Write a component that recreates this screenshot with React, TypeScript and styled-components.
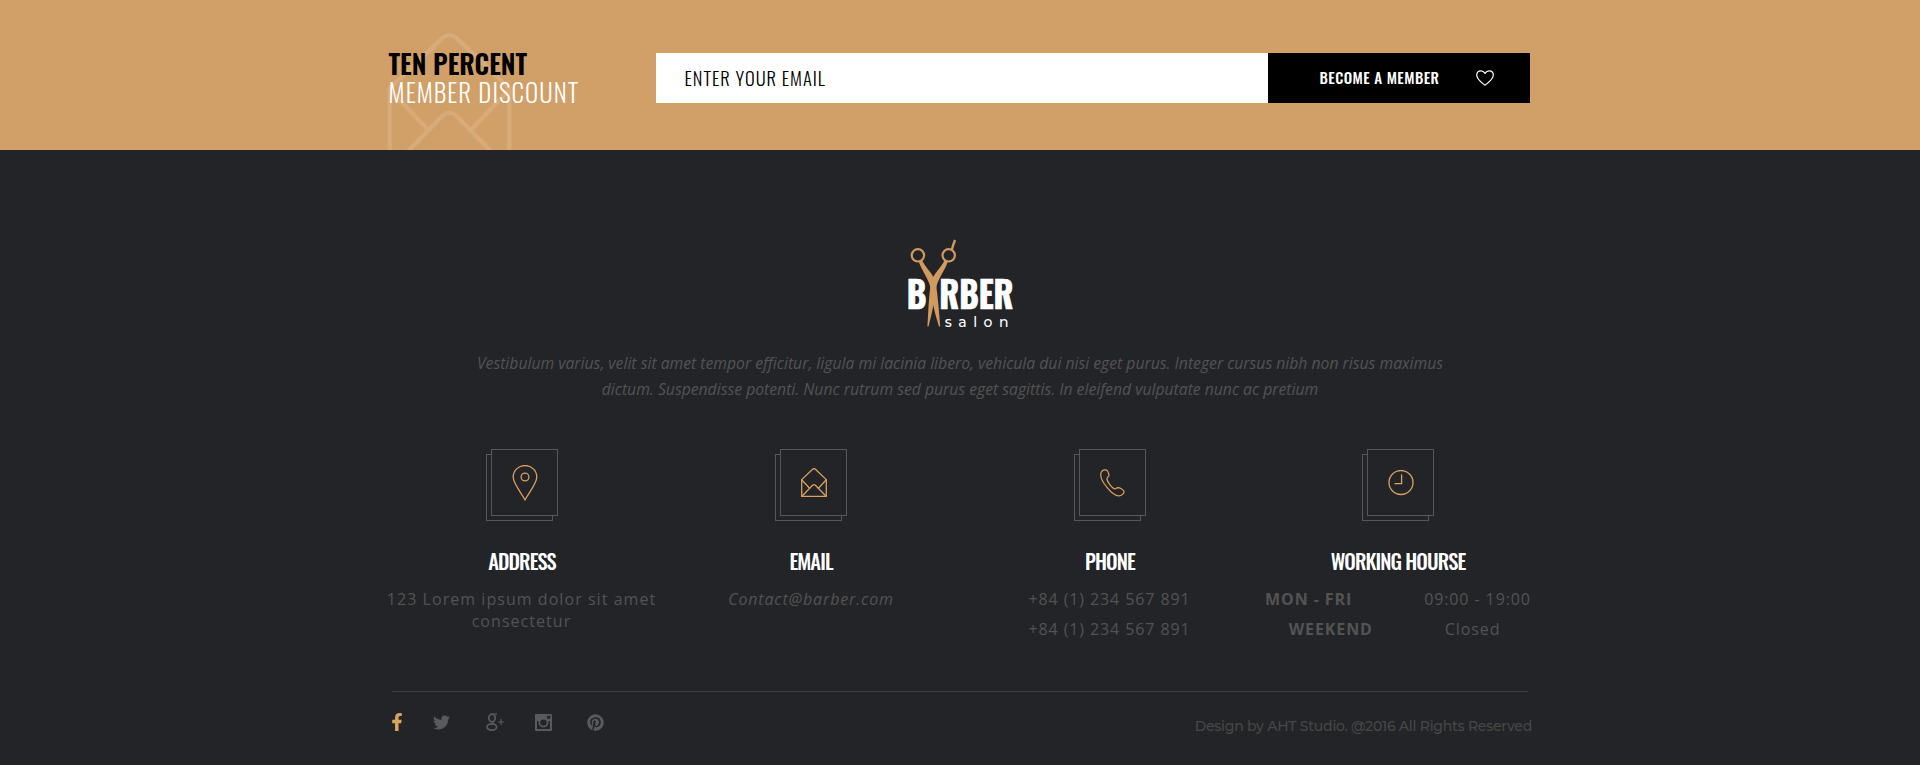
import React from "react";
import styled, { createGlobalStyle } from "styled-components";
import { FaFacebookF, FaTwitter, FaPinterest } from "react-icons/fa";

const gold = "#d19f68";
const dark = "#232428";
const grey = "#545353";

const Global = createGlobalStyle`
  *, *::before { box-sizing: border-box; }
  body { margin: 0; background: ${dark}; font-family: "Open Sans", sans-serif; }
  h2, h3, p { margin: 0; }
`;

const Promo = styled.section`
  height: 150px;
  background: ${gold};
  overflow: hidden;
`;

const Container = styled.div`
  width: 1140px;
  margin: 0 auto;
`;

const PromoRow = styled(Container)`
  display: flex;
  padding-top: 49px;
`;

const PromoTitle = styled.h2`
  position: relative;
  width: 266px;
  font-family: Oswald, sans-serif;
  font-weight: 600;
  font-size: 26.5px;
  line-height: 28px;
  color: #000;
  text-indent: -1.5px;
`;

const PromoSub = styled.span`
  display: block;
  padding-top: 1px;
  font-weight: 300;
  font-size: 25px;
  letter-spacing: 1.05px;
  color: #fff;
`;

const Watermark = styled.svg`
  position: absolute;
  left: -4px;
  top: -17px;
`;

const TitleText = styled.span`
  position: relative;
  display: block;
`;

const Form = styled.form`
  display: flex;
  width: 874px;
  height: 50px;
  margin-top: 4px;
`;

const EmailInput = styled.div`
  flex: 1;
  padding-left: 28.5px;
  background: #fff;
  color: #000;
  font: 300 18.5px/49px Oswald, sans-serif;
  letter-spacing: 0.95px;
`;

const JoinButton = styled.button`
  width: 262px;
  display: flex;
  align-items: center;
  justify-content: space-between;
  border: 0;
  padding: 0 36px 0 51.5px;
  background: #000;
  color: #fff;
  font: 500 15px/48px Oswald, sans-serif;
  letter-spacing: 0.45px;
`;

const JoinLabel = styled.span`
  padding-bottom: 2px;
`;

const Footer = styled.footer`
  height: 615px;
  padding-top: 86px;
  background: ${dark};
`;

const Logo = styled.svg`
  display: block;
  margin: 0 auto;
  overflow: visible;
`;

const Intro = styled.p`
  margin-top: 22px;
  color: ${grey};
  font-style: italic;
  font-size: 15.72px;
  line-height: 26px;
  text-align: center;
`;

const Columns = styled.div`
  display: grid;
  grid-template-columns: 272px 306px 292px 284px;
  width: 1160px;
  margin: 47px auto 0;
  padding-left: 6px;
`;

const Column = styled.div`
  display: flex;
  flex-direction: column;
  align-items: center;
`;

const IconFrame = styled.div`
  position: relative;
  width: 72px;
  height: 72px;
  padding-left: 5px;
  &::before {
    content: "";
    position: absolute;
    left: 0;
    bottom: 0;
    width: 67px;
    height: 67px;
    border: 1px solid #57575a;
  }
`;

const IconFace = styled.div`
  position: relative;
  width: 67px;
  height: 67px;
  display: flex;
  align-items: center;
  justify-content: center;
  border: 1px solid #57575a;
  background: ${dark};
`;

const ColumnTitle = styled.h3`
  margin-top: 25px;
  font: 500 20.5px/30px Oswald, sans-serif;
  letter-spacing: -0.9px;
  color: #fff;
`;

const Detail = styled.p<{ $italic?: boolean; $spacing?: number; $end?: number }>`
  margin-top: 12px;
  & + & { margin-top: 8px; }
  padding-right: ${(p) => p.$end ?? 0}px;
  color: ${grey};
  font-size: 16px;
  line-height: 22px;
  letter-spacing: ${(p) => p.$spacing ?? 0.9}px;
  text-align: center;
  white-space: nowrap;
  font-style: ${(p) => (p.$italic ? "italic" : "normal")};
`;

const HoursRow = styled(Detail)`
  display: flex;
  gap: 72px;
`;

const Bottom = styled(Container)`
  display: flex;
  justify-content: space-between;
  width: 1136px;
  margin-top: 51px;
  border-top: 1px solid #3d3d40;
  padding-top: 20px;
`;

const Social = styled.div`
  display: flex;
  align-items: center;
  height: 20px;
  margin-left: -4px;
`;

const SocialLink = styled.a<{ $active?: boolean; $gap?: number }>`
  display: flex;
  margin-left: ${(p) => p.$gap || 0}px;
  color: ${(p) => (p.$active ? "#d9a25f" : "#5a5a5b")};
`;

const Copyright = styled.p`
  margin-right: -4px;
  color: #484745;
  font: 500 14px/28px Montserrat, sans-serif;
  letter-spacing: -0.24px;
`;

const stroke = { fill: "none", stroke: "#d9a060", strokeWidth: 1.3, strokeLinejoin: "round", strokeLinecap: "round" } as const;

const EnvelopeShape = () => (
  <>
    <path d="M.7 11.6 L11.6 1.2 Q13 0 14.4 1.2 L25.3 11.6 V28.3 H.7 Z" />
    <path d="M.7 11.8 L8.6 20.2 M25.3 11.8 L17.4 20.2" />
    <path d="M.9 28.2 L11.6 17.2 Q13 16 14.4 17.2 L25.1 28.2" />
  </>
);

const PinIcon = () => (
  <svg width="26" height="36" viewBox="0 0 26 36" {...stroke}>
    <path d="M13 35 C11 30 1.2 19 1.2 12 A11.8 11.5 0 0 1 24.8 12 C24.8 19 15 30 13 35 Z" />
    <circle cx="13" cy="12" r="3.9" />
  </svg>
);
const MailIcon = () => (
  <svg width="26" height="29" viewBox="0 0 26 29" {...stroke}><EnvelopeShape /></svg>
);
const PhoneIcon = () => (
  <svg width="25" height="28" viewBox="0 0 26 29" {...stroke}>
    <path d="M1.6 2.6 C3.2.8 6.4.2 7.6 1.8 C9 4 9.8 6 9 7.4 C8.2 8.6 7 9 7.2 10.6 C8 14 12 19 14.6 20.4 C16 21 17 19.6 18.6 19.4 C21 19.4 24.6 21.6 25 23.2 C25.2 25.4 22.4 27.8 19.6 28 C13 28.2 .2 12.4 .8 5.4 C.9 4.2 1 3.3 1.6 2.6 Z" />
  </svg>
);
const ClockIcon = () => (
  <svg width="26" height="26" viewBox="0 0 26 26" {...stroke}>
    <circle cx="13" cy="12.5" r="12" />
    <path d="M13.6 5 V13.7 H7" />
  </svg>
);

const ScissorsLogo = () => (
  <Logo width="108" height="92" viewBox="0 0 108 92">
    <g fontFamily="Oswald, sans-serif" fontWeight="700" fontSize="37.2" fill="#fff" stroke="#fff" strokeWidth="0.7">
      <text x="0.8" y="73.3" textLength="19.8" lengthAdjust="spacingAndGlyphs">B</text>
      <text x="33.3" y="73.3" textLength="74.2" lengthAdjust="spacingAndGlyphs">RBER</text>
    </g>
    <g fill="none" stroke="#d19a5e">
      <circle cx="11.9" cy="19.3" r="6.2" strokeWidth="2.2" />
      <circle cx="42.7" cy="19.3" r="6.2" strokeWidth="2.2" />
      <path d="M45.8 13.8 L47.2 9 L49 4" strokeWidth="2.4" />
    </g>
    <g fill="#d19a5e">
      <path d="M12.7 25.5 L16 24 C18 30 27.5 38 29.5 46 C32 60 33 75 34.2 90.5 L33 90.5 C29 78 26 66 24 50 C22 42 16 35 12.7 25.5 Z" />
      <path d="M41.9 25.5 L38.6 24 C36.6 30 27.1 38 25.1 46 C22.6 60 22.4 75 21.4 90.5 L22.6 90.5 C25.6 78 28.6 66 30.6 50 C32.6 42 38.6 35 41.9 25.5 Z" />
    </g>
    <text x="38.8" y="90.8" fontFamily="Montserrat, sans-serif" fontSize="14" fontWeight="500" letterSpacing="6.5" fill="#fff">salon</text>
  </Logo>
);

const GooglePlusIcon = () => (
  <svg width="18" height="18" viewBox="0 0 18 18" fill="none" stroke="currentColor">
    <ellipse cx="6" cy="5" rx="3.2" ry="3.9" strokeWidth="1.8" />
    <path d="M6.5 1.1 H11 M8 8.4 Q6 9.6 7.4 10.6" strokeWidth="1.3" />
    <ellipse cx="5.8" cy="14" rx="4.8" ry="3.2" strokeWidth="1.7" />
    <path d="M15 6 V12 M12 9 H18" strokeWidth="1.2" />
  </svg>
);
const InstagramIcon = () => (
  <svg width="17" height="17" viewBox="0 0 17 17">
    <path fill="currentColor" fillRule="evenodd" d="M1 0 H16 Q17 0 17 1 V16 Q17 17 16 17 H1 Q0 17 0 16 V1 Q0 0 1 0 Z M12.2 1.8 V4.8 H15.2 V1.8 Z M2 7.2 V15 H15 V7.2 H13.3 A5 5 0 1 1 3.7 7.2 Z M8.5 5.4 A3.2 3.2 0 1 0 8.5 11.8 A3.2 3.2 0 1 0 8.5 5.4 Z" />
  </svg>
);

const Icon = ({ children }: { children: React.ReactNode }) => (
  <IconFrame><IconFace>{children}</IconFace></IconFrame>
);

export default function App() {
  return (
    <>
      <Global />
      <Promo>
        <PromoRow>
          <PromoTitle>
            <Watermark width="127" height="141" viewBox="0 0 26 29" fill="none" stroke="#d8ab7a" strokeWidth="0.9"><EnvelopeShape /></Watermark>
            <TitleText>TEN PERCENT<PromoSub>MEMBER DISCOUNT</PromoSub></TitleText>
          </PromoTitle>
          <Form>
            <EmailInput>ENTER YOUR EMAIL</EmailInput>
            <JoinButton type="button">
              <JoinLabel>BECOME A MEMBER</JoinLabel>
              <svg width="18" height="16" viewBox="0 0 18 16" fill="none" stroke="#fff" strokeWidth="1.2" strokeLinejoin="round">
                <path d="M9 15.2 C5 12 .7 9.4 .7 5 C.7 2.4 2.6 .8 4.8 .8 C6.8 .8 8.2 2 9 3.4 C9.8 2 11.2 .8 13.2 .8 C15.4 .8 17.3 2.4 17.3 5 C17.3 9.4 13 12 9 15.2 Z" />
              </svg>
            </JoinButton>
          </Form>
        </PromoRow>
      </Promo>
      <Footer>
        <ScissorsLogo />
        <Intro>
          Vestibulum varius, velit sit amet tempor efficitur, ligula mi lacinia libero, vehicula dui nisi eget purus. Integer cursus nibh non risus maximus
          <br />
          dictum. Suspendisse potenti. Nunc rutrum sed purus eget sagittis. In eleifend vulputate nunc ac pretium
        </Intro>
        <Columns>
          <Column>
            <Icon><PinIcon /></Icon>
            <ColumnTitle>ADDRESS</ColumnTitle>
            <Detail $spacing={1.05} $end={1}>123 Lorem ipsum dolor sit amet<br />consectetur</Detail>
          </Column>
          <Column>
            <Icon><MailIcon /></Icon>
            <ColumnTitle>EMAIL</ColumnTitle>
            <Detail $italic $spacing={0.85}>Contact@barber.com</Detail>
          </Column>
          <Column>
            <Icon><PhoneIcon /></Icon>
            <ColumnTitle>PHONE</ColumnTitle>
            <Detail $end={1}>+84 (1) 234 567 891</Detail>
            <Detail $end={1}>+84 (1) 234 567 891</Detail>
          </Column>
          <Column>
            <Icon><ClockIcon /></Icon>
            <ColumnTitle>WORKING HOURSE</ColumnTitle>
            <HoursRow><b>MON - FRI</b><span>09:00 - 19:00</span></HoursRow>
            <HoursRow $end={7}><b>WEEKEND</b><span>Closed</span></HoursRow>
          </Column>
        </Columns>
        <Bottom>
          <Social>
            <SocialLink $active><FaFacebookF size={18} /></SocialLink>
            <SocialLink $gap={27}><FaTwitter size={17} /></SocialLink>
            <SocialLink $gap={36}><GooglePlusIcon /></SocialLink>
            <SocialLink $gap={31}><InstagramIcon /></SocialLink>
            <SocialLink $gap={35}><FaPinterest size={17} /></SocialLink>
          </Social>
          <Copyright>Design by AHT Studio. @2016 All Rights Reserved</Copyright>
        </Bottom>
      </Footer>
    </>
  );
}
